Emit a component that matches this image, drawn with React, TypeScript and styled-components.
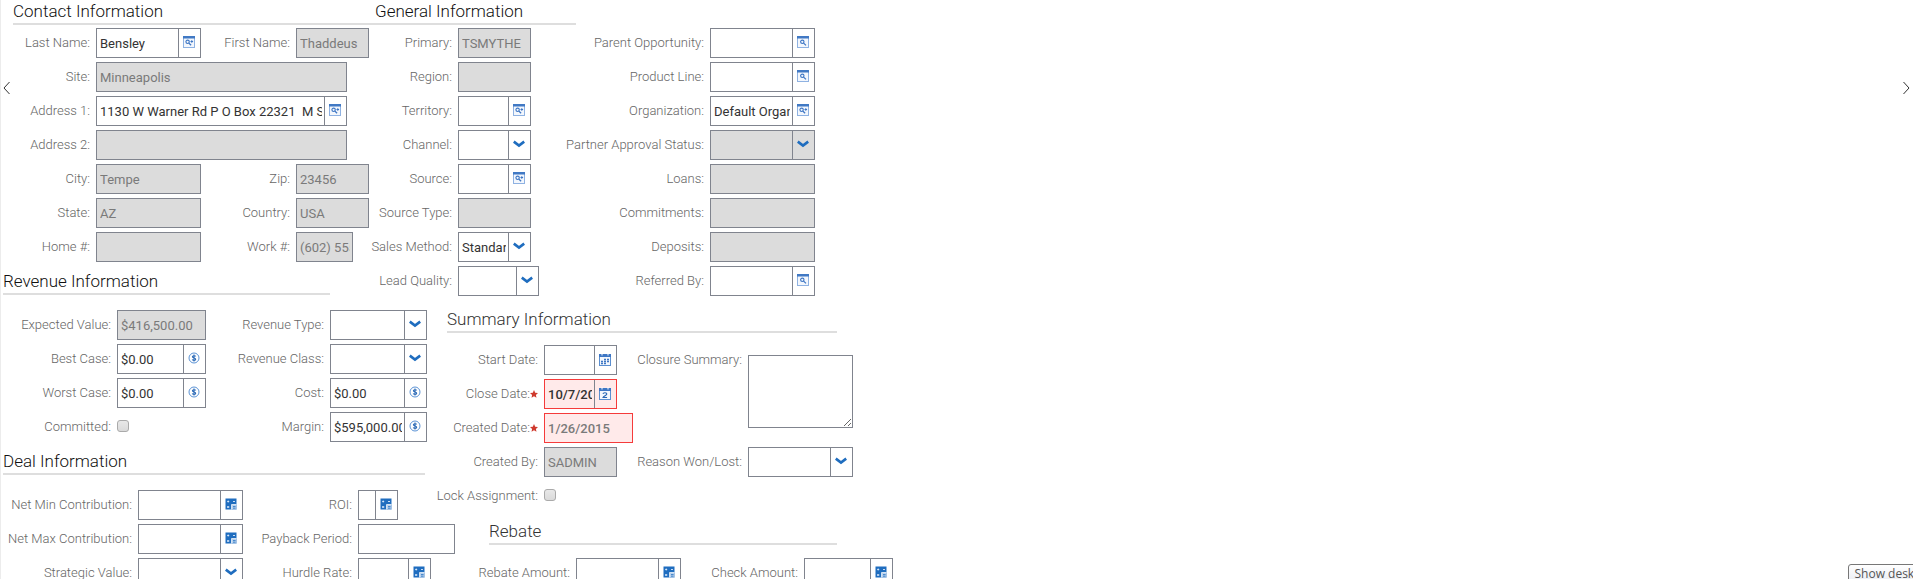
import React, { useId } from "react";
import styled, { createGlobalStyle, css } from "styled-components";

const line = "#80848e";
const blue = "#1f6dbf";

const GlobalStyle = createGlobalStyle`
  *, *::before, *::after { box-sizing: border-box; }
  body {
    margin: 0;
    background: #fff;
    font-family: Roboto, "Liberation Sans", sans-serif;
    font-size: 13px;
    color: #333;
  }
  input, select, textarea, button { font: inherit; color: inherit; }
`;

const Page = styled.main`
  position: relative;
  min-height: 100vh;
  max-height: 100vh;
  overflow: hidden;
  box-shadow: inset 1px 0 0 #ececec;
`;

const Form = styled.form`
  display: flex;
  align-items: flex-start;
`;

const LeftColumn = styled.div`
  flex: none;
  width: 369px;
`;

const RightColumn = styled.div`
  flex: 1;
`;

const Section = styled.section<{ $top?: number; $left?: number }>`
  width: max-content;
  padding-top: ${(p) => p.$top ?? 0}px;
  margin-left: ${(p) => p.$left ?? 0}px;
`;

const Heading = styled.h2<{ $inset?: number; $pad?: number; $width: number; $gap: number; $tone?: string }>`
  margin: 0 0 ${(p) => p.$gap}px ${(p) => p.$inset ?? 0}px;
  padding-left: ${(p) => p.$pad ?? 0}px;
  width: ${(p) => p.$width}px;
  border-bottom: 2px solid #dedede;
  font-size: 17px;
  line-height: 23px;
  font-weight: 300;
  color: ${(p) => p.$tone ?? "#111"};
`;

const FieldGrid = styled.div<{ $columns: string }>`
  display: grid;
  grid-template-columns: ${(p) => p.$columns};
  grid-auto-rows: 30px;
  gap: 4px 6px;
`;

const Label = styled.label<{ $col: number }>`
  grid-column: ${(p) => p.$col};
  display: flex;
  align-items: center;
  justify-content: flex-end;
  line-height: 30px;
  font-weight: 300;
  white-space: nowrap;
  color: #666;
`;

const Slot = styled.div<{ $col: number; $span: number; $rows: number }>`
  grid-column: ${(p) => p.$col} / span ${(p) => p.$span};
  grid-row-end: span ${(p) => p.$rows};
`;

const Box = styled.div<{ $width: number; $off?: boolean; $required?: boolean }>`
  display: flex;
  width: ${(p) => p.$width}px;
  height: 30px;
  border: 1px solid ${line};
  background: #fff;
  ${(p) => p.$off && css`background: #dcdcdc; color: #7a7a7a;`}
  ${(p) => p.$required && css`border-color: #f53b3b; background: #ffeaea; font-weight: 500;`}
`;

const entry = css`
  flex: 1;
  min-width: 0;
  width: 0;
  height: 28px;
  margin: 0;
  padding: 0 2px 0 3px;
  border: 0;
  border-radius: 0;
  outline: 0;
  background: transparent;
  opacity: 1;
`;

const TextInput = styled.input`${entry}`;

const Select = styled.select`
  ${entry}
  appearance: none;
  text-overflow: clip;
`;

const iconCell = css`
  flex: none;
  display: flex;
  align-items: center;
  justify-content: center;
  width: 22px;
  padding: 0 1px 2px 0;
  border: 0;
  border-left: 1px solid ${line};
  background: transparent;
`;

const IconButton = styled.button`${iconCell}`;
const ArrowCell = styled.span`${iconCell} pointer-events: none;`;

const CheckBox = styled.input`
  appearance: none;
  display: block;
  width: 12px;
  height: 12px;
  margin: 8px 0 0;
  border: 1px solid #aaa;
  border-radius: 3px;
  background: linear-gradient(#e8e8e8, #dadada);
`;

const TextArea = styled.textarea`
  display: block;
  width: 105px;
  height: 73px;
  margin: 10px 0 0;
  padding: 3px;
  border: 1px solid ${line};
  outline: 0;
`;

const PagerButton = styled.button<{ $side: "left" | "right" }>`
  position: absolute;
  top: 80px;
  ${(p) => p.$side}: 2px;
  display: flex;
  padding: 1px 1px;
  border: 0;
  background: transparent;
`;

const Tooltip = styled.div`
  position: absolute;
  right: -26px;
  bottom: -5px;
  padding: 0 5px;
  border: 1px solid #777;
  border-radius: 3px;
  background: linear-gradient(#fff, #e8eaf2);
  font-family: "Open Sans", sans-serif;
  font-size: 12px;
  line-height: 18px;
  white-space: nowrap;
  color: #555;
`;

const Lookup = ({ multi }: { multi?: boolean }) => (
  <svg width="12" height="12" viewBox="0 0 12 12" fill="none" aria-hidden="true">
    <rect x="0.5" y="0.5" width="11" height="11" fill="#f3f7fd" stroke="#8fb2e2" />
    <rect width="12" height="2.5" fill="#4179c4" />
    <circle cx={multi ? 4.6 : 5.3} cy="5.8" r="1.7" stroke="#3d76c4" strokeWidth="1.1" />
    <path d={multi ? "M5.9 7.1l2.2 2.2" : "M6.6 7.1l2.4 2.3"} stroke="#3d76c4" strokeWidth="1.3" />
    {multi && <path d="M7.5 5.5h2.6M8.8 4.2v2.6" stroke="#3d76c4" />}
  </svg>
);

const Chevron = () => (
  <svg width="12" height="8" viewBox="0 0 12 8" fill="none" aria-hidden="true">
    <path d="M.8 1.600l5.200 4 5.200-4" stroke={blue} strokeWidth="2.600" />
  </svg>
);

const Currency = () => (
  <svg width="12" height="12" viewBox="0 0 12 12" fill="none" aria-hidden="true">
    <circle cx="6" cy="6" r="5" stroke="#5b93d6" strokeWidth="1" />
    <path d="M7.8 4.4C7.4 3.5 4.4 3.3 4.4 4.8c0 1.4 3.3.9 3.3 2.4 0 1.5-3 1.4-3.5.4M6 2.4v7.2" stroke="#2867b5" strokeWidth="1.1" />
  </svg>
);

const Calculator = () => (
  <svg width="12" height="12" viewBox="0 0 12 12" fill="none" aria-hidden="true">
    <rect x="0.5" y="0.5" width="11" height="11" fill={blue} />
    <rect x="7" y="7" width="4.5" height="4.5" fill="#b9d2ee" />
    <path d="M2.2 3.5h2M3.2 2.5v2M8 3.5h2M2.2 8l2 2M4.2 8l-2 2" stroke="#dceafa" strokeWidth="0.9" />
    <path d="M6.5 6.5v5M6.5 6.5h5" stroke="#fff" strokeWidth="0.8" />
    <path d="M8 8.6h2.6M8 10.2h2.6" stroke={blue} strokeWidth="0.8" />
  </svg>
);

const Calendar = ({ day }: { day?: boolean }) => (
  <svg width="12" height="13" viewBox="0 0 12 13" fill="none" aria-hidden="true">
    <rect x="0.5" y="1.5" width="11" height="11" fill="#f3f7fd" stroke="#5c8fd0" />
    <path d="M0 1h12v3H0z" fill="#3d76c4" />
    <path d="M3 0v2.500M9 0v2.500" stroke="#fff" strokeWidth="1" />
    {day ? (
      <path d="M4 6.800c.3-1.500 3.800-1.400 3.800.2C7.800 8.300 4.600 9 4.100 10.500h4" stroke="#2867b5" strokeWidth="1.200" />
    ) : (
      <path d="M5 6.500h5M2 8.500h8M2 10.500h5" stroke="#3d76c4" strokeWidth="1.300" strokeDasharray="2 1" />
    )}
  </svg>
);

const RequiredStar = () => (
  <svg width="8" height="8" viewBox="0 0 10 10" role="img" aria-label="Required">
    <path d="M5 0l1.500 3.300 3.500.4-2.600 2.400.7 3.600L5 7.900 1.900 9.700l.7-3.600L0 3.700l3.500-.4z" fill="#cf3a2e" />
  </svg>
);

type Kind = "text" | "lookup" | "multi" | "select" | "money" | "calc" | "date" | "day" | "check" | "area";

const icons: Partial<Record<Kind, [React.ReactNode, string]>> = {
  lookup: [<Lookup />, "Look up"],
  multi: [<Lookup multi />, "Look up"],
  money: [<Currency />, "Currency"],
  calc: [<Calculator />, "Calculator"],
  date: [<Calendar />, "Pick date"],
  day: [<Calendar day />, "Pick date"],
};

interface FieldProps {
  label: string;
  col?: number;
  kind?: Kind;
  value?: string;
  width?: number;
  span?: number;
  off?: boolean;
  required?: boolean;
}

function Field({ label, col = 1, kind = "text", value = "", width = 105, span = 1, off, required }: FieldProps) {
  const id = useId();
  const icon = icons[kind];
  let control: React.ReactNode;
  if (kind === "check") {
    control = <CheckBox id={id} type="checkbox" />;
  } else if (kind === "area") {
    control = <TextArea id={id} />;
  } else if (kind === "select") {
    control = (
      <Box $width={width} $off={off}>
        <Select id={id} disabled={off} defaultValue={value}>
          <option>{value}</option>
        </Select>
        <ArrowCell><Chevron /></ArrowCell>
      </Box>
    );
  } else {
    control = (
      <Box $width={width} $off={off} $required={required}>
        <TextInput id={id} type="text" defaultValue={value} readOnly={off} />
        {icon && <IconButton type="button" aria-label={`${icon[1]}: ${label}`}>{icon[0]}</IconButton>}
      </Box>
    );
  }
  return (
    <>
      <Label htmlFor={id} $col={col}>{label}:{required && <RequiredStar />}</Label>
      <Slot $col={col + 1} $span={span} $rows={kind === "area" ? 3 : 1}>{control}</Slot>
    </>
  );
}

export default function App() {
  return (
    <Page>
      <GlobalStyle />
      <Form>
        <LeftColumn>
          <Section>
            <Heading $inset={13} $width={356} $gap={3}>Contact Information</Heading>
            <FieldGrid $columns="90px 105px 83px 73px">
              <Field label="Last Name" kind="multi" value="Bensley" />
              <Field label="First Name" col={3} value="Thaddeus" width={73} off />
              <Field label="Site" value="Minneapolis" width={251} span={3} off />
              <Field label="Address 1" kind="multi" value="1130 W Warner Rd P O Box 22321  M S 1234" width={251} span={3} />
              <Field label="Address 2" width={251} span={3} off />
              <Field label="City" value="Tempe" off />
              <Field label="Zip" col={3} value="23456" width={73} off />
              <Field label="State" value="AZ" off />
              <Field label="Country" col={3} value="USA" width={73} off />
              <Field label="Home #" off />
              <Field label="Work #" col={3} value="(602) 555-0100" width={57} off />
            </FieldGrid>
          </Section>
          <Section $top={8}>
            <Heading $inset={3} $width={327} $gap={15}>Revenue Information</Heading>
            <FieldGrid $columns="111px 89px 112px 97px">
              <Field label="Expected Value" value="$416,500.00" width={89} off />
              <Field label="Revenue Type" col={3} kind="select" width={97} />
              <Field label="Best Case" kind="money" value="$0.00" width={89} />
              <Field label="Revenue Class" col={3} kind="select" width={97} />
              <Field label="Worst Case" kind="money" value="$0.00" width={89} />
              <Field label="Cost" col={3} kind="money" value="$0.00" width={97} />
              <Field label="Committed" kind="check" />
              <Field label="Margin" col={3} kind="money" value="$595,000.00" width={97} />
            </FieldGrid>
          </Section>
          <Section $top={8}>
            <Heading $inset={3} $width={422} $gap={15}>Deal Information</Heading>
            <FieldGrid $columns="132px 105px 103px 97px">
              <Field label="Net Min Contribution" kind="calc" />
              <Field label="ROI" col={3} kind="calc" width={40} />
              <Field label="Net Max Contribution" kind="calc" />
              <Field label="Payback Period" col={3} width={97} />
              <Field label="Strategic Value" kind="select" />
              <Field label="Hurdle Rate" col={3} kind="calc" width={73} />
            </FieldGrid>
          </Section>
        </LeftColumn>

        <RightColumn>
          <Section>
            <Heading $pad={6} $width={207} $gap={3}>General Information</Heading>
            <FieldGrid $columns="83px 73px 167px 105px">
              <Field label="Primary" value="TSMYTHE" width={73} off />
              <Field label="Parent Opportunity" col={3} kind="lookup" />
              <Field label="Region" width={73} off />
              <Field label="Product Line" col={3} kind="lookup" />
              <Field label="Territory" kind="multi" width={73} />
              <Field label="Organization" col={3} kind="multi" value="Default Organization" />
              <Field label="Channel" kind="select" width={73} />
              <Field label="Partner Approval Status" col={3} kind="select" off />
              <Field label="Source" kind="multi" width={73} />
              <Field label="Loans" col={3} off />
              <Field label="Source Type" width={73} off />
              <Field label="Commitments" col={3} off />
              <Field label="Sales Method" kind="select" value="Standard" width={73} />
              <Field label="Deposits" col={3} off />
              <Field label="Lead Quality" kind="select" width={81} />
              <Field label="Referred By" col={3} kind="lookup" />
            </FieldGrid>
          </Section>
          <Section $top={12} $left={66}>
            <Heading $inset={12} $width={390} $gap={12} $tone="#333">Summary Information</Heading>
            <FieldGrid $columns="103px 73px 119px 105px">
              <Field label="Start Date" kind="date" width={73} />
              <Field label="Closure Summary" col={3} kind="area" />
              <Field label="Close Date" kind="day" value="10/7/2015" width={73} required />
              <Field label="Created Date" value="1/26/2015" width={89} off required />
              <Field label="Created By" value="SADMIN" width={73} off />
              <Field label="Reason Won/Lost" col={3} kind="select" />
              <Field label="Lock Assignment" kind="check" />
            </FieldGrid>
          </Section>
          <Section $top={9} $left={108}>
            <Heading $inset={12} $width={348} $gap={13} $tone="#333">Rebate</Heading>
            <FieldGrid $columns="93px 105px 111px 89px">
              <Field label="Rebate Amount" kind="calc" />
              <Field label="Check Amount" col={3} kind="calc" width={89} />
            </FieldGrid>
          </Section>
        </RightColumn>
      </Form>

      <PagerButton type="button" $side="left" aria-label="Previous">
        <svg width="7" height="14" viewBox="0 0 7 14" fill="none"><path d="M6.500 1L1 7l5.500 6" stroke="#333" /></svg>
      </PagerButton>
      <PagerButton type="button" $side="right" aria-label="Next">
        <svg width="7" height="14" viewBox="0 0 7 14" fill="none"><path d="M.5 1L6 7 .5 13" stroke="#333" /></svg>
      </PagerButton>
      <Tooltip role="tooltip">Show desktop</Tooltip>
    </Page>
  );
}
